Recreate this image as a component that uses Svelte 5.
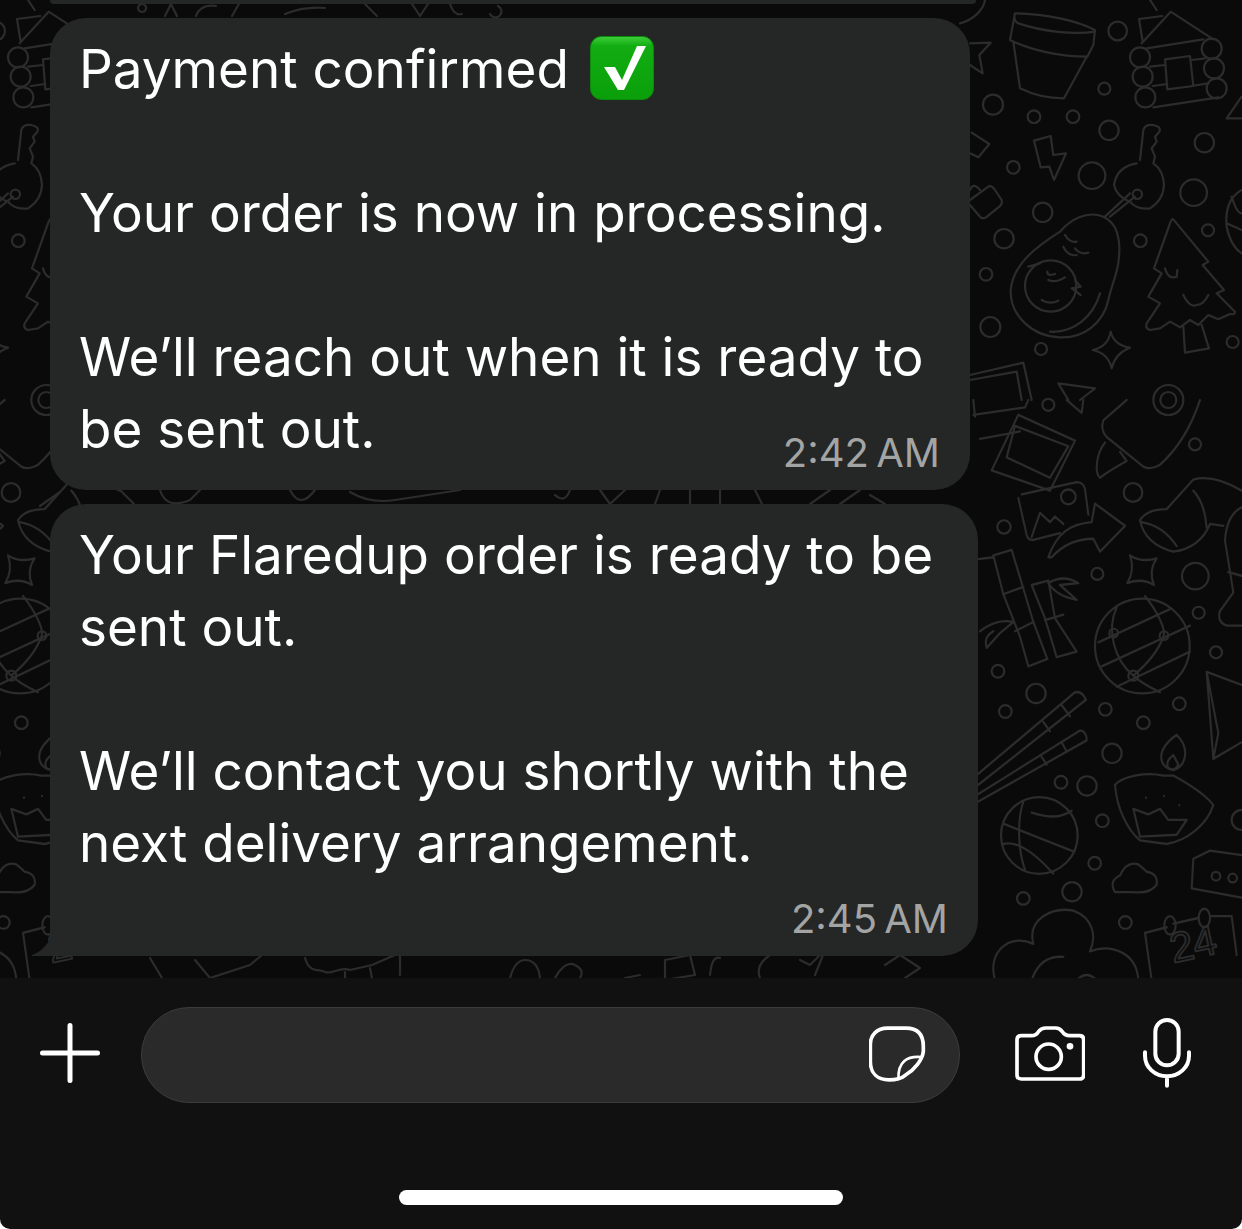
<script>
  // wallpaper dots, measured from the right hand column of the chat
  const dotsTop = [
    [473,93,28],[433,266,18],[99,314,30],[222,350,19],[339,350,19],[447,391,29],[733,428,29],
    [160,502,19],[396,527,40],[701,578,40],[248,637,29],[132,716,29],[744,691,18],[541,722,19],
    [78,823,19],[91,981,30],[243,1047,18],[818,1026,18],[532,583,14],[272,858,77],
    [625,1200,45],[625,1200,24]
  ].map(([x, y, r]) => [960 + x / 3, y / 3, r / 3]);

  const dotsLow = [
    [265,13,18],[705,120,18],[519,250,28],[132,343,20],[412,470,18],[706,476,40],[716,575,18],
    [768,682,18],[114,733,19],[228,793,29],[136,842,19],[436,836,19],[658,821,19],[550,872,19],
    [456,955,29],[303,1033,19],[381,1043,29],[427,1137,19],[404,1252,19],[190,1347,19],
    [336,1329,29],[496,1412,19],[547,665,142],[461,630,13],[612,637,13],[520,745,15],
    [238,1177,115],[768,1287,13],[818,1292,13],[845,1135,30]
  ].map(([x, y, r]) => [960 + x / 3, 400 + y * 0.37, r / 3]);

  const strips = [
    "M142 4a4 4 0 1 0 .1 0M165 16l6-12 6 12M196 16q4-12 20-10M232 16l8-14M285 14q20-8 40-6M365 4l12 12M412 4l8 12 8-12M450 4q4 12 12 10M490 14a6 6 0 1 0 8-8",
    "M60 492l-20 14M120 490l14 14M160 490q6 20 30 10l10-10M290 490q10 20 25 0M350 492q20 12 45 8l65-10M555 495q10 9 15-5M600 490l10 14 15-14M660 490l-5 14M690 490v14M720 490v14M755 490l7 14M810 504l20-14M840 504l20-14M870 495l15 9",
    "M150 958l12 20M195 960l15 18 40-13 12-10M305 958c5 17 15 10 20 14 7 3 15-6 25-2l22-5 23-10M345 972v6M370 968l2 10M400 955v20M510 978q5-18 15-18 13 0 15 18M555 978q10-18 20-13 10 5 5 13M625 978l15-3M665 960l25-5 5 20-30 5zM710 975q2-20 10-17M760 978q-5-13 10-23M800 960l10 5 15-15-10 25M885 965l15-10 20 13-15 10"
  ];
</script>

<div class="page">
  <section class="chat">
    <svg class="wallpaper" width="1242" height="978" viewBox="0 0 1242 978" fill="none" stroke="#2c2c2c" stroke-width="2.2" stroke-linecap="round" stroke-linejoin="round">
      <g id="doodles">
        <g transform="translate(960 0) scale(.33333)">
          <g stroke-width="6.6">
            <path d="M165 40C260 42 350 62 405 90L400 135 382 170C300 170 210 150 150 120ZM165 40C160 55 165 65 175 70 250 95 340 105 405 95M160 125 180 265C220 285 270 295 312 295L380 170"/>
            <path d="M537 57 607 48M537 57 548 125M545 130 632 35 760 118M560 145 730 118M570 200 615 195M695 180 735 175M578 258 622 252M695 258 745 250M580 322 775 292"/>
            <circle cx="540" cy="172" r="30"/><circle cx="548" cy="230" r="30"/><circle cx="556" cy="292" r="30"/>
            <circle cx="755" cy="146" r="30"/><circle cx="762" cy="205" r="30"/><circle cx="770" cy="265" r="30"/>
            <path d="M615 178 690 168 700 258 622 268Z"/>
            <path d="M30 130 92 128 58 165 68 220 30 195M35 398 88 432 55 472 30 460M30 600 85 560Q95 555 105 570L125 600Q128 612 118 620L78 652Q68 658 60 650L30 615M30 570Q40 545 60 570"/>
            <path d="M222 422 272 408 280 465 318 460 282 540 268 500 242 502Z"/>
            <path d="M540 480 550 390Q555 372 580 375 605 380 598 395L585 410 590 425 575 445 585 470 580 490Q610 510 612 555 610 600 570 625 530 630 510 605 470 590 462 555 470 500 530 490M450 650 525 590M435 650 510 580"/>
            <path d="M430 650C380 630 330 660 300 695 230 740 160 790 152 870 150 950 220 1010 300 1012 370 1015 430 970 445 900 455 850 480 810 478 740 475 690 460 665 430 650ZM270 995C340 1000 400 950 420 880"/>
            <path d="M315 705Q330 730 350 725M310 740Q325 770 350 765M345 745Q360 765 385 758M262 815Q262 830 285 822M265 840Q285 850 315 832M245 900Q270 915 295 902M345 840 362 860 335 865 362 885M205 800 240 790"/>
            <path d="M640 658 745 785 728 795 792 870 770 880 825 935Q825 945 810 942L775 958 745 945 715 975 690 960 660 982 630 965 600 985 570 990Q555 985 560 970L600 910 565 890 605 820 582 805 630 670Q635 655 640 658ZM670 980 675 1058 747 1045 725 975M615 805Q625 840 650 830L652 810M670 885Q690 925 710 915 730 915 745 885"/>
            <path d="M452 995Q462 1035 510 1043 465 1060 455 1105 445 1060 398 1050 445 1040 452 995Z"/>
            <path d="M30 1125 190 1088 215 1200M30 1140 170 1115 185 1200M295 1150 405 1165 360 1200M295 1150 325 1200"/>
            <path d="M845 290 800 355H845M845 570C810 590 795 630 800 680 810 730 830 750 845 760M815 590Q830 640 845 640M800 670 845 690M0 70C40 60 70 30 75 0M570 0 590 30"/>
          </g>
        </g>
        <g transform="translate(960 400) scale(.33333 .37)">
          <g stroke-width="6.3">
            <path d="M175 40 345 110 270 245 95 190ZM165 70 325 125 270 210 140 155ZM40 40 195 20 205 0M45 45 40 0M60 105 180 85M320 0 365 35 370 0"/>
            <path d="M500 0 430 55Q420 80 440 100L550 180Q570 190 600 175 680 110 720 0M435 115C405 150 405 200 420 210 450 190 470 180 500 165L480 140"/>
            <path d="M185 255 350 222Q370 222 375 240L385 310M175 265 200 365Q205 380 220 378L300 360M215 370 240 305 270 330 285 315 310 335"/>
            <ellipse cx="325" cy="262" rx="22" ry="20"/>
            <path d="M265 425C290 360 330 335 395 330L405 280 495 340 420 410 400 375C340 375 300 400 275 425Z"/>
            <path d="M540 325Q560 295 620 295L700 215Q760 200 845 245M540 325Q555 390 640 410 720 400 750 335L790 340M545 330Q610 340 650 395M700 245Q735 280 740 345M845 290Q800 310 795 380L820 520 780 570Q770 600 800 610H845M805 465 845 475"/>
            <path d="M510 420Q545 440 590 428 565 460 582 500 545 480 502 495 525 460 510 420Z"/>
            <path d="M415 655 630 565M425 720 690 610M470 775 690 680M470 560C440 620 460 700 520 745 550 770 590 785 600 790M555 530C590 570 620 620 610 640 590 690 540 730 520 745"/>
            <path d="M100 420 155 405 190 510 220 600 262 700 205 720 180 640 130 525ZM130 525 190 505M165 625 220 600M215 500 265 488 285 590 350 680 290 695 255 590ZM255 595 310 580M265 495Q310 470 355 495L300 500 350 540Q290 530 265 495M60 625Q110 590 160 600L120 630 80 670Q70 640 100 625M55 430 100 425"/>
            <path d="M55 1010 345 790Q365 785 378 810L55 1040M55 1065 360 893Q380 895 380 920L55 1085M250 870 270 895M305 825 330 855M245 965 260 985M305 925 320 950"/>
            <path d="M465 1040C490 1015 560 1005 610 1015H640C690 1040 740 1070 760 1095 740 1150 680 1190 620 1200L540 1190C500 1160 470 1100 465 1040ZM650 905C690 940 680 990 640 1000 600 995 580 950 650 905ZM640 960 655 985Q645 1005 625 995 615 975 640 960ZM520 1105 565 1120 600 1105 625 1135H680L650 1175 540 1180Z"/>
            <path d="M130 1145 340 1220M190 1085C170 1140 175 1220 195 1270M215 1115C270 1130 300 1130 335 1110M130 1200C170 1190 220 1220 280 1280"/>
            <path d="M465 1330Q445 1300 480 1285 500 1245 535 1255 555 1270 560 1275 595 1280 590 1310 570 1335 520 1330Z"/>
            <path d="M700 1240 750 1218 845 1230M700 1240 695 1320 845 1345"/>
            <path d="M555 1440 620 1425M640 1415 715 1400M750 1395H815L830 1500M555 1440 575 1568"/>
            <ellipse cx="630" cy="1420" rx="17" ry="25"/><ellipse cx="733" cy="1400" rx="17" ry="25"/>
            <path d="M105 1568C80 1490 150 1440 220 1470 200 1400 280 1370 340 1380 400 1400 410 1450 390 1490 450 1470 530 1490 535 1568M215 1568Q240 1500 310 1505M350 1568Q380 1540 410 1568"/>
            <path d="M740 735 845 770M740 735 760 970 845 925M740 735 775 900 760 970"/>
            <path d="M558 1075h.1M612 1070h.1M658 1095h.1"/>
          </g>
        </g>
        {#each [...dotsTop, ...dotsLow] as [cx, cy, r]}
          <circle {cx} {cy} {r} />
        {/each}
        <text x="1170" y="958" class="doodle-num" transform="rotate(-12 1195 945)">24</text>
      </g>
      <use href="#doodles" x="-1122" />
      {#each strips as d}
        <path {d} />
      {/each}
    </svg>

    <div class="messages">
      <div class="bubble sliver"></div>

      <div class="bubble first">
        <p>Payment confirmed <svg class="emoji" width="64" height="64" viewBox="0 0 64 64">
            <defs>
              <linearGradient id="green" x1="0" y1="0" x2="0" y2="1">
                <stop offset="0" stop-color="#3fcf3a" />
                <stop offset="0.15" stop-color="#12ad12" />
                <stop offset="1" stop-color="#0a9f0a" />
              </linearGradient>
            </defs>
            <rect x="0.5" y="0.5" width="63" height="63" rx="11" fill="url(#green)" stroke="#0c8a0c" />
            <path d="M14 31 L25 31 L32 44 L47 10 L56 10 L34 54 L28 54 Z" fill="#fff" />
          </svg></p>
        <p class="blank">&nbsp;</p>
        <p>Your order is now in processing.</p>
        <p class="blank">&nbsp;</p>
        <p>We’ll reach out when it is ready to</p>
        <p>be sent out.</p>
        <span class="time">2:42 AM</span>
      </div>

      <div class="bubble second">
        <p>Your Flaredup order is ready to be</p>
        <p>sent out.</p>
        <p class="blank">&nbsp;</p>
        <p>We’ll contact you shortly with the</p>
        <p>next delivery arrangement.</p>
        <span class="time">2:45 AM</span>
        <svg class="tail" width="24" height="36" viewBox="0 0 24 36">
          <path d="M24 0 C22 16 14 30 0 35 L0 36 L24 36 Z" fill="#252626" />
        </svg>
      </div>
    </div>
  </section>

  <footer class="composer">
    <div class="input-row">
      <button class="icon plus" aria-label="Add">
        <svg width="60" height="60" viewBox="0 0 60 60" fill="none" stroke="#fff" stroke-width="5" stroke-linecap="round">
          <path d="M30 2.500V57.500M2.500 30H57.500" />
        </svg>
      </button>
      <div class="field">
        <svg width="57" height="56" viewBox="90 140 170 166" fill="none" stroke="#fff" stroke-width="11" stroke-linecap="round" stroke-linejoin="round">
          <path d="M145 146H200C235 146 252 165 252 200V215C250 240 225 270 200 285 185 298 170 300 150 300 115 300 94 280 94 245V195C94 165 115 146 145 146Z" />
          <path d="M246 232C205 228 175 245 178 298" stroke-width="8" />
        </svg>
      </div>
      <button class="icon camera" aria-label="Camera">
        <svg width="70" height="56" viewBox="526 138 210 164" fill="none" stroke="#fff" stroke-width="11" stroke-linejoin="round">
          <path d="M545 165H575Q590 165 597 152 605 142 618 142H648Q660 142 667 152 675 165 690 165H720Q732 165 732 178V282Q732 295 720 295H545Q532 295 532 282V178Q532 165 545 165Z" />
          <circle cx="627" cy="228" r="38" />
          <circle cx="691" cy="197" r="10" fill="#fff" stroke="none" />
        </svg>
      </button>
      <button class="icon mic" aria-label="Record">
        <svg width="50" height="70" viewBox="906 112 150 210" fill="none" stroke="#fff" stroke-width="12" stroke-linecap="round">
          <rect x="946" y="118" width="70" height="136" rx="35" />
          <path d="M915 215V225C915 260 945 287 981 287 1017 287 1047 260 1047 225V215M981 287V315" />
        </svg>
      </button>
    </div>
    <div class="home-bar"></div>
  </footer>
</div>

<style>
  :global(body) {
    margin: 0;
    background: #fff;
  }

  .page {
    width: 1242px;
    height: 1229px;
    display: flex;
    flex-direction: column;
    overflow: hidden;
    font-family: Inter, "Liberation Sans", sans-serif;
  }

  .chat {
    position: relative;
    height: 978px;
    flex: none;
    background: #0a0a0a;
    overflow: hidden;
  }

  .wallpaper {
    position: absolute;
    inset: 0;
  }

  .doodle-num {
    font-family: "Liberation Sans", sans-serif;
    font-size: 42px;
    font-weight: 400;
    stroke-width: 1.8;
  }

  .messages {
    position: relative;
    display: flex;
    flex-direction: column;
    align-items: flex-start;
    padding-left: 50px;
  }

  .bubble {
    position: relative;
    box-sizing: border-box;
    background: #252626;
    border-radius: 36px;
    padding: 15px 29px 25px;
    color: #fff;
  }

  .sliver {
    width: 926px;
    height: 4px;
    padding: 0;
    border-radius: 0 0 30px 30px;
    margin-bottom: 14px;
  }

  .first {
    width: 920px;
    height: 472px;
    margin-bottom: 14px;
  }

  .second {
    width: 928px;
    height: 452px;
    border-bottom-left-radius: 0;
  }

  p {
    margin: 0;
    font-size: 53px;
    line-height: 72px;
    font-weight: 400;
    white-space: nowrap;
  }

  .emoji {
    vertical-align: -12px;
    margin-left: 6px;
  }

  .time {
    position: absolute;
    right: 30px;
    bottom: 13px;
    font-size: 40px;
    line-height: 48px;
    color: #a3a4a4;
    word-spacing: -4px;
  }

  .tail {
    position: absolute;
    left: -18px;
    bottom: 0;
  }

  .composer {
    flex: 1;
    background: #111;
    border-radius: 0 0 10px 10px;
    display: flex;
    flex-direction: column;
    align-items: center;
  }

  .input-row {
    box-sizing: border-box;
    width: 100%;
    height: 96px;
    margin-top: 29px;
    padding-left: 40px;
    display: flex;
    align-items: center;
  }

  .icon {
    flex: none;
    padding: 0;
    border: 0;
    background: none;
    display: flex;
  }

  .plus {
    margin-bottom: 4px;
  }

  .field {
    flex: none;
    box-sizing: border-box;
    width: 819px;
    height: 96px;
    margin-left: 41px;
    padding: 0 33px 2px 0;
    background: #2a2a2a;
    border: 1px solid #3c3c3c;
    border-radius: 48px;
    display: flex;
    align-items: center;
    justify-content: flex-end;
  }

  .camera {
    margin: 0 0 3px 55px;
  }

  .mic {
    margin: 0 0 5px 57px;
  }

  .home-bar {
    width: 444px;
    height: 15px;
    margin-top: 87px;
    background: #fff;
    border-radius: 8px;
  }
</style>
